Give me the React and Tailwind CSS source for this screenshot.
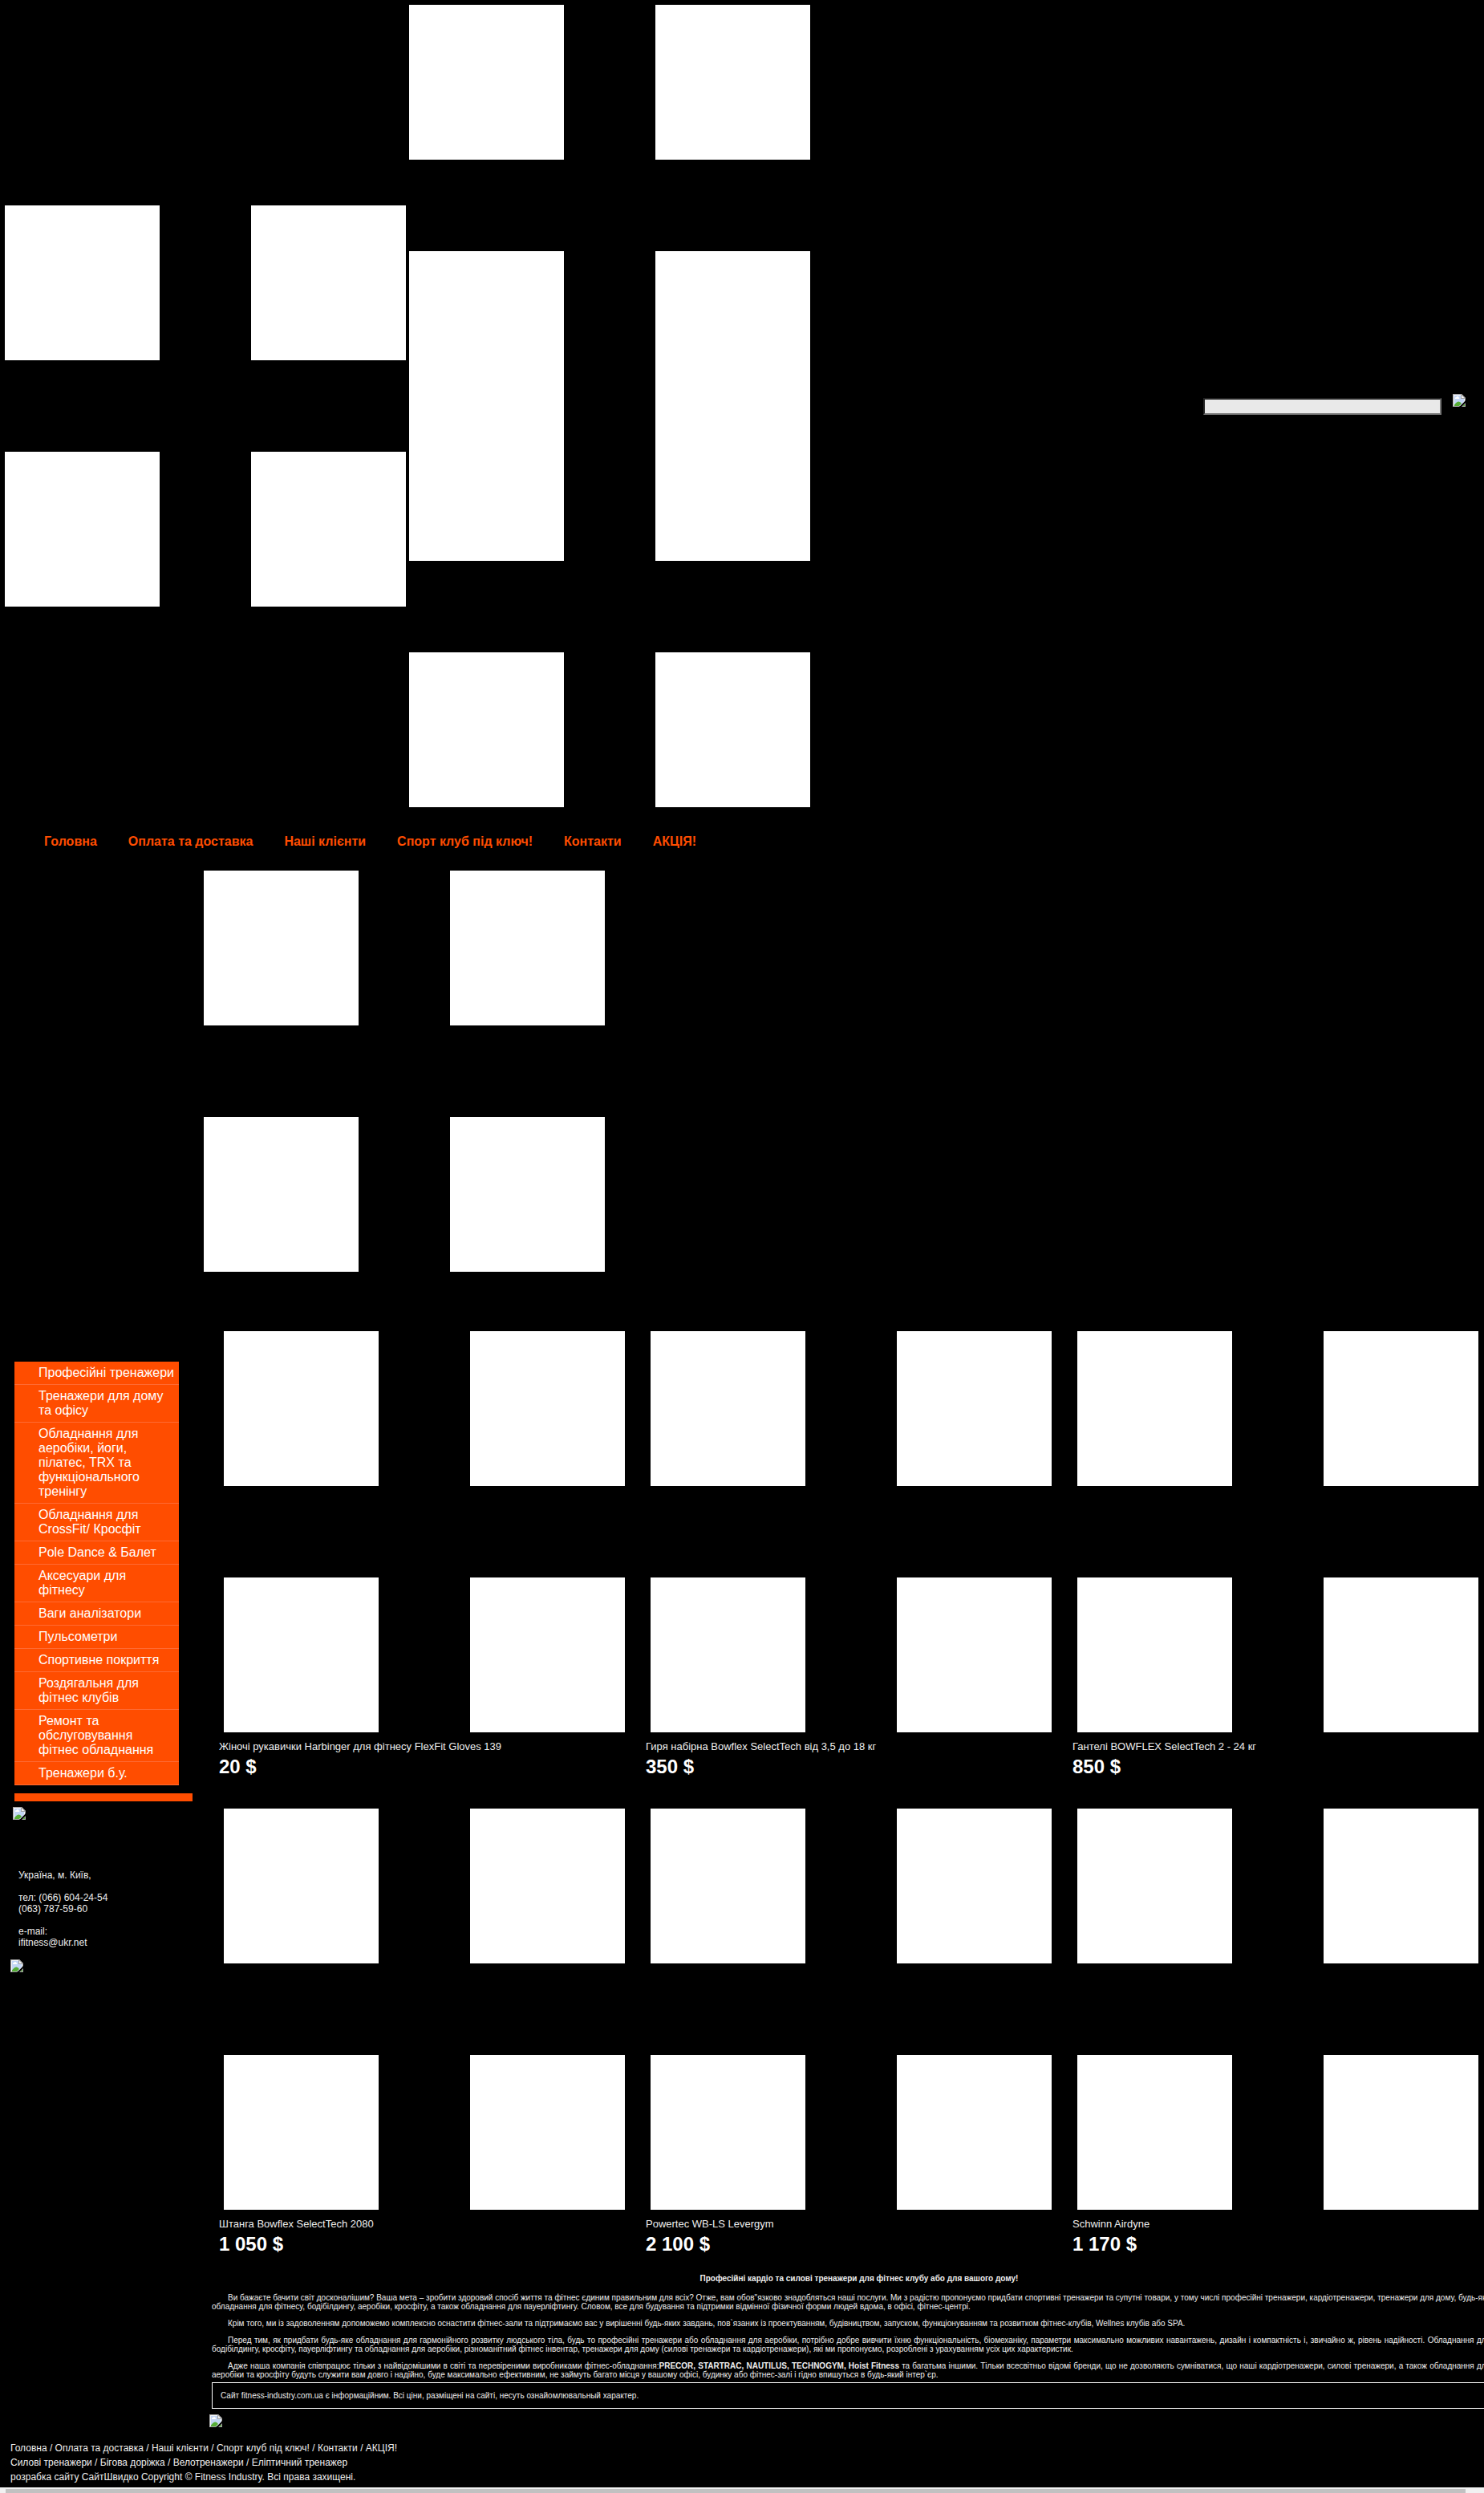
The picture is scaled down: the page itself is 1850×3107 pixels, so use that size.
const MENU = ["Головна", "Оплата та доставка", "Наші клієнти", "Спорт клуб під ключ!", "Контакти", "АКЦІЯ!"];

const CATEGORIES = [
  "Професійні тренажери",
  "Тренажери для дому та офісу",
  "Обладнання для аеробіки, йоги, пілатес, TRX та функціонального тренінгу",
  "Обладнання для CrossFit/ Кросфіт",
  "Pole Dance & Балет",
  "Аксесуари для фітнесу",
  "Ваги аналізатори",
  "Пульсометри",
  "Спортивне покриття",
  "Роздягальня для фітнес клубів",
  "Ремонт та обслуговування фітнес обладнання",
  "Тренажери б.у.",
];

const PRODUCTS = [
  ["Жіночі рукавички Harbinger для фітнесу FlexFit Gloves 139", "20 $"],
  ["Гиря набірна Bowflex SelectTech від 3,5 до 18 кг", "350 $"],
  ["Гантелі BOWFLEX SelectTech 2 - 24 кг", "850 $"],
  ["Штанга Bowflex SelectTech 2080", "1 050 $"],
  ["Powertec WB-LS Levergym", "2 100 $"],
  ["Schwinn Airdyne", "1 170 $"],
];

const FOOTER_LINKS = ["Силові тренажери", "Бігова доріжка", "Велотренажери", "Еліптичний тренажер"];

function Placeholder() {
  return (
    <div className="grid size-[500px] shrink-0 grid-cols-2 gap-[114px]">
      <div className="bg-white" />
      <div className="bg-white" />
      <div className="bg-white" />
      <div className="bg-white" />
    </div>
  );
}

function MissingImage() {
  return (
    <svg width="16" height="16" viewBox="0 0 16 16" className="block shrink-0" aria-hidden="true">
      <path d="M0 0H11L16 5V8L8 16H0Z" fill="#a3a3a3" />
      <path d="M1 1H10.5L15 5.5V9L9 15H1Z" fill="#f4f6fb" />
      <path d="M2 2H10V6H14V9.500L9 14.500L2 14Z" fill="#c3d6f5" />
      <path d="M3 6V5Q3 4 4.500 4Q5 2.800 6.200 3Q7.500 3.200 7.500 4.300Q8.500 4.500 8.300 6Z" fill="#ffffff" />
      <path d="M2 14V13.500Q5 9.500 7.500 9.500Q9.500 9.500 11 12L8 15H2Z" fill="#56ad36" />
      <path d="M10 0H11L16 5V6H10Z" fill="#a3a3a3" />
      <path d="M11 1.500L14.500 5H11Z" fill="#f3f3f3" />
      <path d="M16 11V16H11Z" fill="#a3a3a3" />
      <path d="M15 12.500V15H12.500Z" fill="#56ad36" />
    </svg>
  );
}

function LinkRow({ items }) {
  return (
    <p>
      {items.map((item, i) => (
        <span key={item}>
          {i > 0 && " / "}
          <a href="#">{item}</a>
        </span>
      ))}
    </p>
  );
}

export default function App() {
  return (
    <div className="flex min-h-screen flex-col overflow-hidden bg-black font-['Liberation_Sans',Arial,sans-serif] text-[#eee]">
      <header className="flex items-center gap-1 px-1.5 pt-1.5">
        <a href="#" aria-label="Fitness Industry">
          <Placeholder />
        </a>
        <div>
          <Placeholder />
          <Placeholder />
        </div>
        <form className="mr-[17px] ml-auto flex items-start gap-3.5 pb-1">
          <input
            type="text"
            aria-label="Пошук"
            className="mt-[5px] h-[21px] w-[297px] border-2 border-t-[#222] border-r-[#767676] border-b-[#767676] border-l-[#222] bg-[#e9e9e9] px-1 text-xs text-black"
          />
          <button type="button" aria-label="Шукати">
            <MissingImage />
          </button>
        </form>
      </header>

      <nav className="flex h-[79px] items-center gap-[39px] pt-[7px] pl-[55px] text-base leading-[18px] font-bold text-[#ff4d00]">
        {MENU.map((item) => (
          <a key={item} href="#">{item}</a>
        ))}
      </nav>

      <div className="flex items-start">
        <aside className="w-[254px] shrink-0 pt-[612px]">
          <ul className="ml-[18px] w-[205px] bg-[#ff4d00] text-base leading-[18px] text-white">
            {CATEGORIES.map((item) => (
              <li key={item} className="border-b border-[#ff6a33] py-[5px] pr-[5px] pl-[30px]">
                <a href="#" className="block">{item}</a>
              </li>
            ))}
          </ul>
          <div className="mt-2.5 ml-[18px] h-2.5 w-[222px] bg-[#ff4d00]" />
          <div className="mt-[7px] ml-4">
            <MissingImage />
          </div>
          <address className="mt-[62px] ml-[23px] text-xs leading-[14px] not-italic">
            <p>Україна, м. Київ,</p>
            <p className="mt-3.5">
              тел: (066) 604-24-54
              <br />
              (063) 787-59-60
            </p>
            <p className="mt-3.5">
              e-mail:
              <br />
              ifitness@ukr.net
            </p>
          </address>
          <div className="mt-3.5 ml-[13px]">
            <MissingImage />
          </div>
        </aside>

        <main className="-mr-[27px] min-w-0 flex-1">
          <Placeholder />
          <section className="mt-[74px] mr-2 ml-[19px] grid grid-cols-3">
            {PRODUCTS.map(([name, price]) => (
              <article key={name} className="h-[595px]">
                <div className="pl-1.5">
                  <Placeholder />
                </div>
                <h3 className="mt-2.5 text-[13px] leading-4">
                  <a href="#">{name}</a>
                </h3>
                <p className="mt-[3px] text-2xl leading-7 font-bold text-white">{price}</p>
              </article>
            ))}
          </section>

          <section className="-mt-[15px] mr-[19px] ml-2.5 text-justify text-[10px] leading-[11px]">
            <h1 className="mb-[13px] text-center indent-5 font-bold">
              Професійні кардіо та силові тренажери для фітнес клубу або для вашого дому!
            </h1>
            <p className="mb-2.5 indent-5">
              Ви бажаєте бачити світ досконалішим? Ваша мета – зробити здоровий спосіб життя та фітнес єдиним правильним
              для всіх? Отже, вам обов"язково знадобляться наші послуги. Ми з радістю пропонуємо придбати спортивні
              тренажери та супутні товари, у тому числі професійні тренажери, кардіотренажери, тренажери для дому, будь-яке
              обладнання для фітнесу, бодібілдингу, аеробіки, кросфіту, а також обладнання для пауерліфтингу. Словом, все
              для будування та підтримки відмінної фізичної форми людей вдома, в офісі, фітнес-центрі.
            </p>
            <p className="mb-2.5 indent-5">
              Крім того, ми із задоволенням допоможемо комплексно оснастити фітнес-зали та підтримаємо вас у вирішенні
              будь-яких завдань, пов`язаних із проектуванням, будівництвом, запуском, функціонуванням та розвитком
              фітнес-клубів, Wellnes клубів або SPA.
            </p>
            <p className="mb-2.5 indent-5">
              Перед тим, як придбати будь-яке обладнання для гармонійного розвитку людського тіла, будь то професійні
              тренажери або обладнання для аеробіки, потрібно добре вивчити їхню функціональність, біомеханіку, параметри
              максимально можливих навантажень, дизайн і компактність і, звичайно ж, рівень надійності. Обладнання для
              бодібілдингу, кросфіту, пауерліфтингу та обладнання для аеробіки, різноманітний фітнес інвентар, тренажери
              для дому (силові тренажери та кардіотренажери), які ми пропонуємо, розроблені з урахуванням усіх цих
              характеристик.
            </p>
            <p className="indent-5">
              Адже наша компанія співпрацює тільки з найвідомішими в світі та перевіреними виробниками
              фітнес-обладнання:<strong>PRECOR, STARTRAC, NAUTILUS, TECHNOGYM, Hoist Fitness</strong> та багатьма іншими.
              Тільки всесвітньо відомі бренди, що не дозволяють сумніватися, що наші кардіотренажери, силові тренажери, а
              також обладнання для аеробіки та кросфіту будуть служити вам довго і надійно, буде максимально ефективним, не
              займуть багато місця у вашому офісі, будинку або фітнес-залі і гідно впишуться в будь-який інтер`єр.
            </p>
            <p className="mt-1 border border-white p-2.5">
              Сайт fitness-industry.com.ua є інформаційним. Всі ціни, разміщені на сайті, несуть ознайомлювальный характер.
            </p>
          </section>
          <div className="mt-[7px] ml-[7px]">
            <MissingImage />
          </div>
        </main>
      </div>

      <footer className="mt-[17px] ml-[13px] text-xs leading-[18px]">
        <LinkRow items={MENU} />
        <LinkRow items={FOOTER_LINKS} />
        <p>розрабка сайту СайтШвидко Copyright © Fitness Industry. Всі права захищені.</p>
      </footer>

      <div className="mt-auto flex h-[7px] shrink-0 bg-[#f1f1f1] pt-0.5 pr-[23px] pl-[7px]">
        <div className="flex-1 bg-[#c1c1c1]" />
      </div>
    </div>
  );
}
